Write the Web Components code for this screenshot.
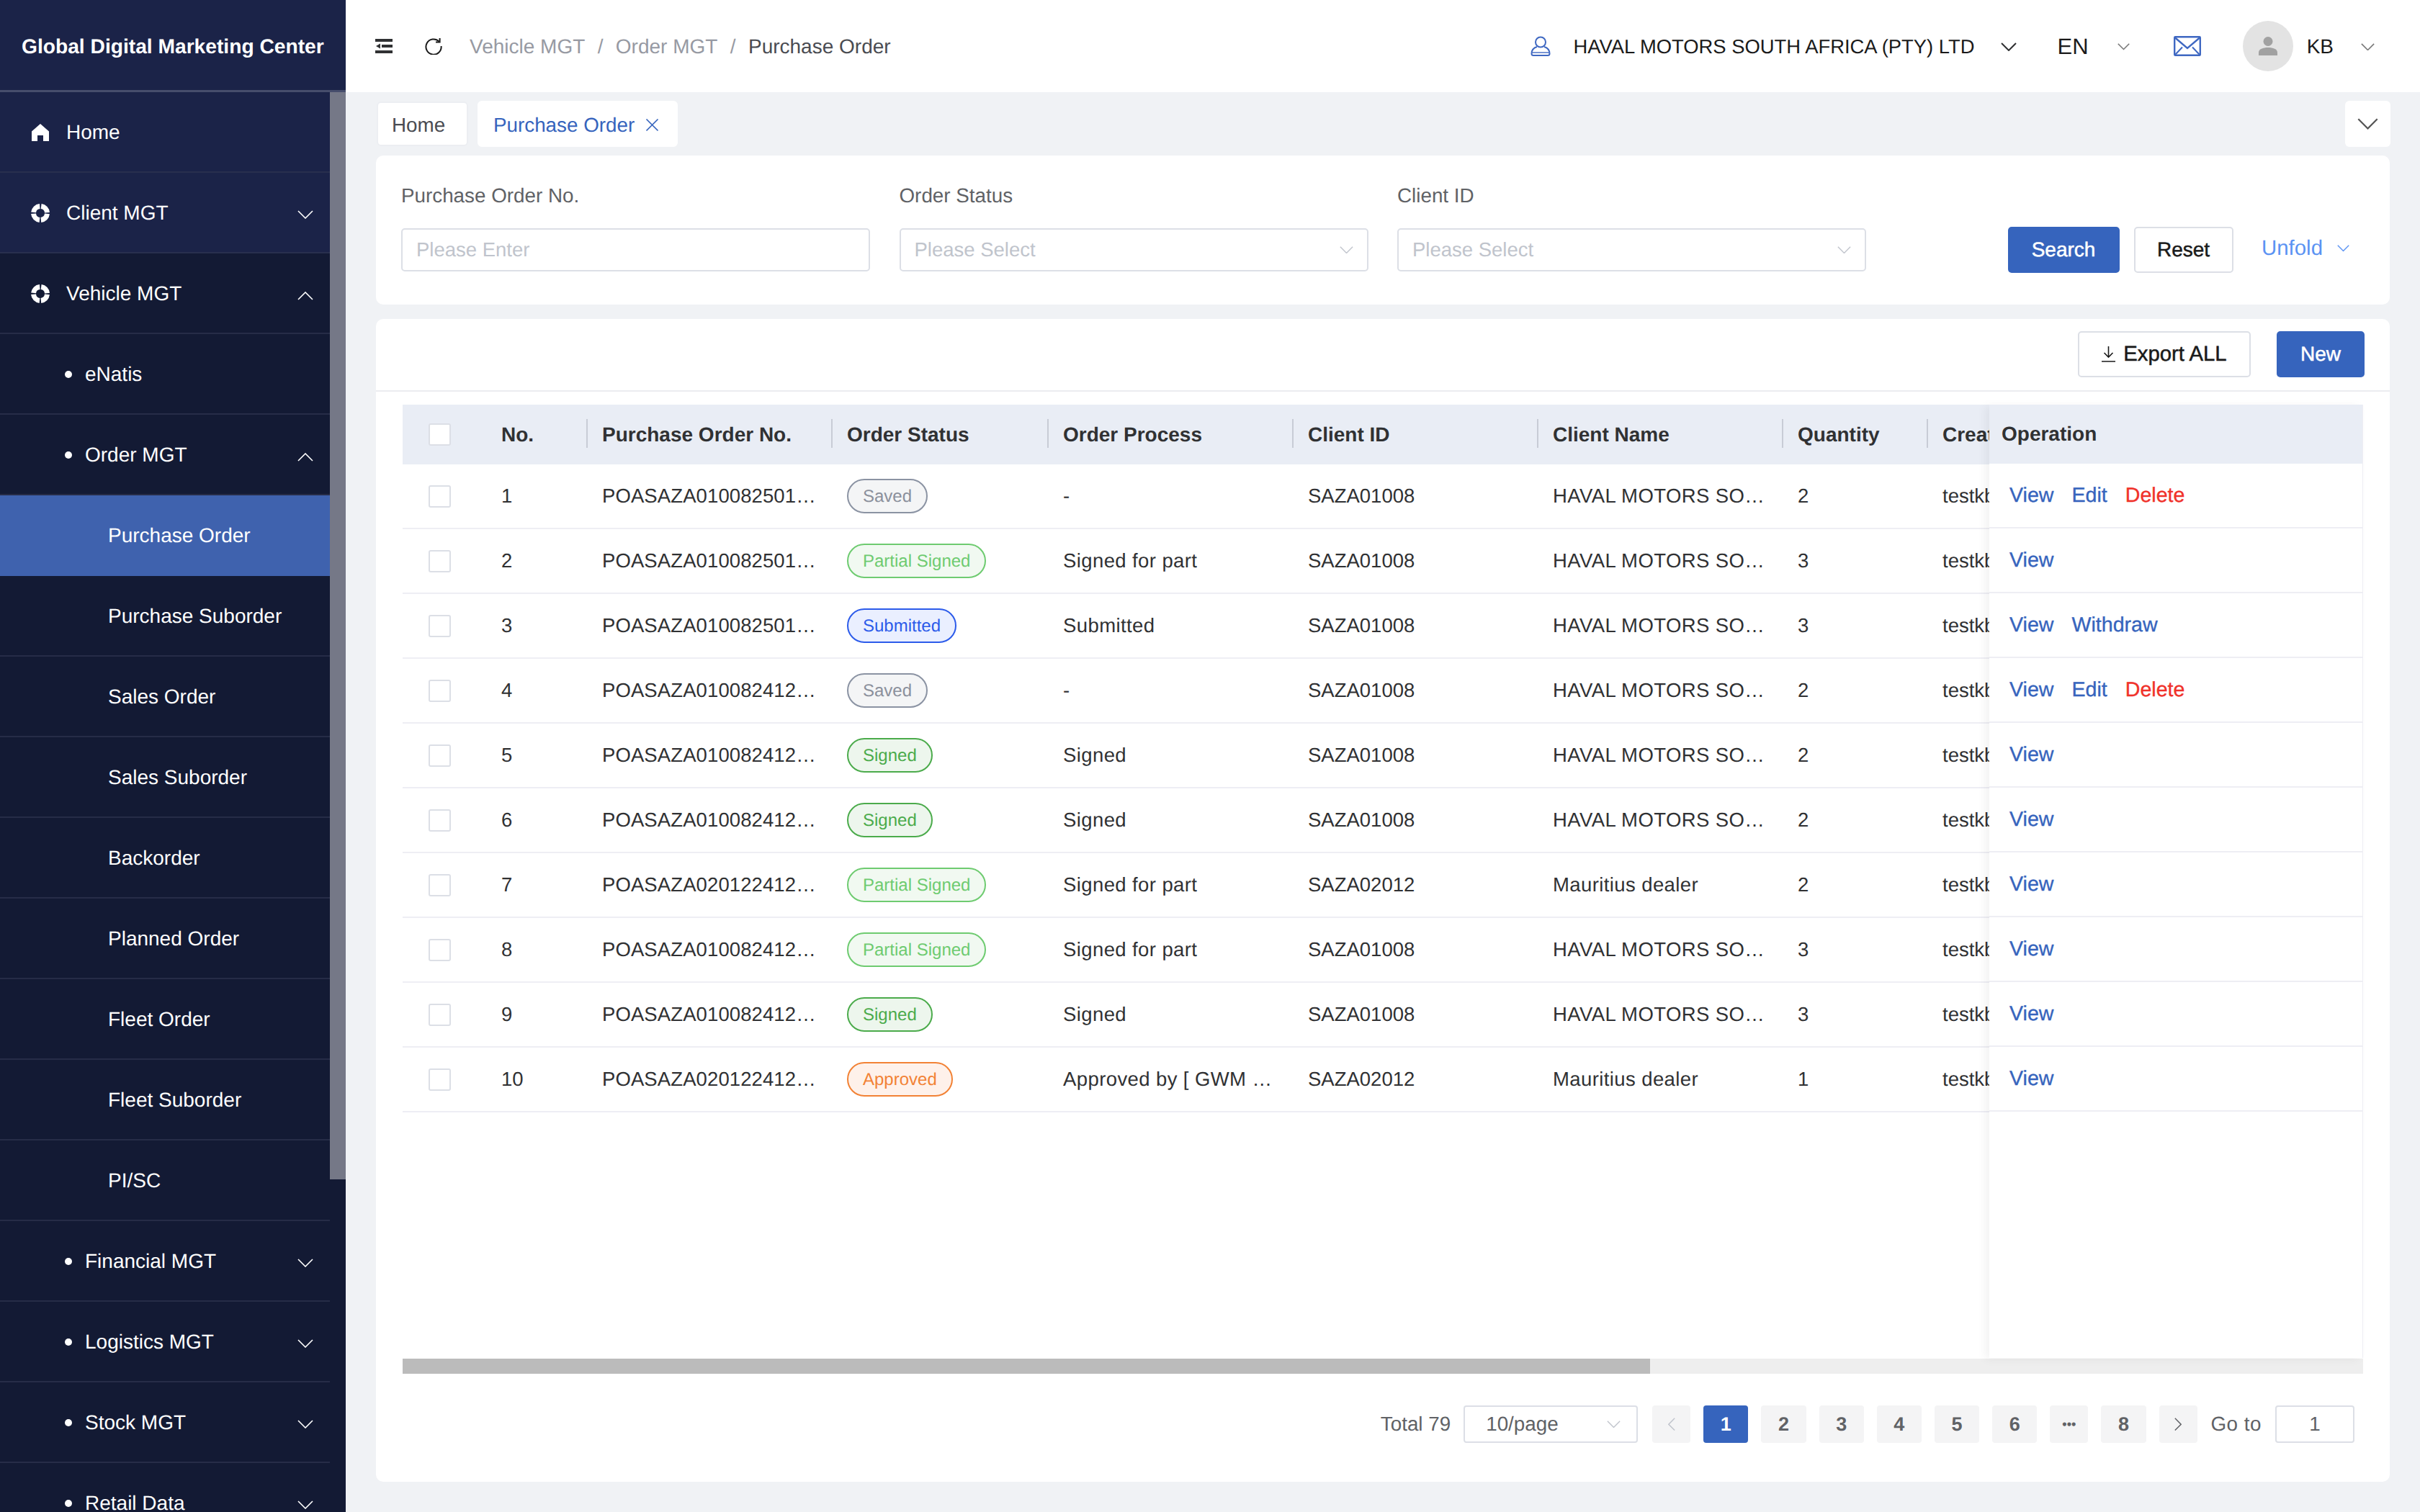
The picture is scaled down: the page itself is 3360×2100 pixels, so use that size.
<!DOCTYPE html>
<html lang="en">
<head>
<meta charset="utf-8">
<title>Purchase Order</title>
<style>
html, body { margin: 0; height: 100%; overflow: hidden; }
body { font: 27.8px "Liberation Sans", Arial, sans-serif; color: #303133; background: #f0f2f5; text-rendering: geometricPrecision; }
</style>
</head>
<body>
<app-shell>
  <side-nav slot="side">
    <nav-item icon="home">Home</nav-item>
    <nav-item icon="target" arrow="down">Client MGT</nav-item>
    <nav-item icon="target" arrow="up" dark>Vehicle MGT</nav-item>
    <nav-item level="1" dark>eNatis</nav-item>
    <nav-item level="1" arrow="up" dark>Order MGT</nav-item>
    <nav-item level="2" active>Purchase Order</nav-item>
    <nav-item level="2" dark>Purchase Suborder</nav-item>
    <nav-item level="2" dark>Sales Order</nav-item>
    <nav-item level="2" dark>Sales Suborder</nav-item>
    <nav-item level="2" dark>Backorder</nav-item>
    <nav-item level="2" dark>Planned Order</nav-item>
    <nav-item level="2" dark>Fleet Order</nav-item>
    <nav-item level="2" dark>Fleet Suborder</nav-item>
    <nav-item level="2" dark>PI/SC</nav-item>
    <nav-item level="1" arrow="down" dark>Financial MGT</nav-item>
    <nav-item level="1" arrow="down" dark>Logistics MGT</nav-item>
    <nav-item level="1" arrow="down" dark>Stock MGT</nav-item>
    <nav-item level="1" arrow="down" dark>Retail Data</nav-item>
  </side-nav>
  <top-bar></top-bar>
  <tab-strip></tab-strip>
  <search-panel></search-panel>
  <order-table></order-table>
</app-shell>

<script>
const chevron = (w, color, dir = "down", sw = 2) => {
  const pts = dir === "down" ? "1,1 11,11 21,1" : dir === "up" ? "1,11 11,1 21,11" : dir === "left" ? "11,1 1,11 11,21" : "1,1 11,11 1,21";
  const box = dir === "left" || dir === "right" ? "0 0 12 22" : "0 0 22 12";
  return `<svg width="${w}" viewBox="${box}" fill="none" stroke="${color}" stroke-width="${sw}" style="display:block;flex:none"><polyline points="${pts}"/></svg>`;
};

class AppShell extends HTMLElement {
  constructor() {
    super();
    this.attachShadow({ mode: "open" });
    this.shadowRoot.innerHTML = `
<style>
:host { display: grid; grid-template-columns: 480px 1fr; height: 2100px; width: 3360px; }
main { display: flex; flex-direction: column; min-width: 0; }
</style>
<slot name="side"></slot>
<main><slot></slot></main>`;
  }
}

class SideNav extends HTMLElement {
  constructor() {
    super();
    this.attachShadow({ mode: "open" });
    this.shadowRoot.innerHTML = `
<style>
:host { display: flex; flex-direction: column; height: 2100px; overflow: hidden; position: relative; background: #131a34; }
.logo { flex: none; height: 128px; box-sizing: border-box; display: flex; align-items: center; padding: 3px 0 0 30px; background: #1b2348;
  border-bottom: 3px solid #474e6c; color: #fff; font-weight: 700; font-size: 28.2px; white-space: nowrap; }
.menu { width: 458px; }
.thumb { position: absolute; left: 458px; top: 128px; width: 22px; height: 1510px; background: #757887; }
</style>
<div class="logo">Global Digital Marketing Center</div>
<div class="menu"><slot></slot></div>
<div class="thumb"></div>`;
  }
}

class NavItem extends HTMLElement {
  constructor() {
    super();
    this.attachShadow({ mode: "open" });
  }
  connectedCallback() {
    const level = this.getAttribute("level") || "0";
    const icon = this.getAttribute("icon");
    const arrow = this.getAttribute("arrow");
    const glyph = icon === "home"
      ? `<svg class="ico" viewBox="0 0 26 26" fill="#fff"><path d="M13 1 L25 11.5 V25 H17 V17 H9 V25 H1 V11.5 Z"/></svg>`
      : icon === "target"
      ? `<svg class="ico" viewBox="0 0 26 26" fill="none" stroke="#fff" stroke-width="7"><circle cx="13" cy="13" r="9.5" stroke-dasharray="12.9 2" stroke-dashoffset="-1"/></svg>`
      : level === "1" ? `<span class="dot"></span>` : "";
    this.shadowRoot.innerHTML = `
<style>
:host { display: flex; align-items: center; box-sizing: border-box; height: 112px; padding-top: 2px; background: #131a34; border-bottom: 2px solid #262c47; color: #fff; font-size: 28px; white-space: nowrap; }
:host(:not([dark]):not([active])) { background: #1b2348; border-bottom-color: #282f4e; }
:host([active]) { background: #3f62ae; border-bottom-color: #3f62ae; }
:host([level="2"]) { padding-left: 150px; }
:host([level="1"]) { padding-left: 90px; }
:host(:not([level])) { padding-left: 43px; }
.ico { width: 26px; height: 26px; flex: none; margin-right: 23px; }
.dot { width: 10px; height: 10px; border-radius: 50%; background: #fff; margin-right: 18px; flex: none; }
.arrow { margin-left: auto; margin-right: 23px; padding-top: ${arrow === "up" ? 6 : 4}px; }
</style>
${glyph}<slot></slot>${arrow ? `<span class="arrow">${chevron(22, "#fff", arrow, 1.6)}</span>` : ""}`;
  }
}

class TopBar extends HTMLElement {
  constructor() {
    super();
    this.attachShadow({ mode: "open" });
    this.shadowRoot.innerHTML = `
<style>
:host { display: flex; align-items: center; flex: none; height: 128px; background: #fff; padding: 0 63px 0 41px; white-space: nowrap; }
svg { flex: none; display: block; }
.crumbs { margin-left: 38px; padding-top: 2px; color: #979aa3; font-size: 28px; }
.crumbs i { font-style: normal; margin: 0 17.4px; }
.crumbs b { font-weight: 400; color: #4a4c52; }
.right { margin-left: auto; display: flex; align-items: center; color: #1a1a1a; font-size: 27.4px; }
.right span { padding-top: 2px; }
.avatar { width: 70px; height: 70px; border-radius: 50%; background: #e3e3e3; display: flex; align-items: center; justify-content: center; margin: 0 19px 0 58px; }
</style>
<svg width="24" height="20" viewBox="0 0 24 20" fill="#303133"><rect width="24" height="4"/><rect y="16" width="24" height="4"/><rect x="9" y="8" width="15" height="4"/><path d="M1 10 L7 6.5 V13.5 Z"/></svg>
<svg style="margin-left:45px" width="24" height="24" viewBox="0 0 24 24" fill="none" stroke="#1a1a1a" stroke-width="2"><path d="M19.5 5.5 A10.6 10.6 0 1 0 22.6 12"/><path d="M20.6 1 V6.6 H15" fill="none"/></svg>
<div class="crumbs">Vehicle MGT<i>/</i>Order MGT<i>/</i><b>Purchase Order</b></div>
<div class="right">
  <svg width="28" height="28" viewBox="0 0 28 28" fill="none" stroke="#3f68c2" stroke-width="2"><circle cx="14" cy="8.5" r="7"/><path d="M9 15 C4 16.5 1.5 20 1.5 24.5 Q1.5 27 4 27 H24 Q26.5 27 26.5 24.5 C26.5 20 24 16.5 19 15"/><path d="M2 23 H26" stroke-width="1.4"/></svg>
  <span style="margin-left:32px">HAVAL MOTORS SOUTH AFRICA (PTY) LTD</span>
  <span style="margin-left:36px">${chevron(22, "#303133", "down", 2)}</span>
  <span style="margin-left:57px;font-size:31px">EN</span>
  <span style="margin-left:40px">${chevron(17, "#777", "down", 2)}</span>
  <svg style="margin-left:61px" width="38" height="28" viewBox="0 0 38 28" fill="none" stroke="#3f68c2" stroke-width="2.4"><rect x="1.2" y="1.2" width="35.6" height="25.6" rx="1"/><path d="M1.5 2 L19 17 L36.5 2"/><path d="M2 26 L12 15.5 M36 26 L26 15.5" stroke-width="2"/></svg>
  <div class="avatar"><svg width="28" height="28" viewBox="0 0 28 28" fill="#a1a1a1"><circle cx="14" cy="7.5" r="6.5"/><path d="M1 27 V23 C1 18 7 16 14 16 C21 16 27 18 27 23 V27 Z"/></svg></div>
  <span style="font-size:28px">KB</span>
  <span style="margin-left:38px">${chevron(19, "#777", "down", 1.8)}</span>
</div>`;
  }
}

class TabStrip extends HTMLElement {
  constructor() {
    super();
    this.attachShadow({ mode: "open" });
    this.shadowRoot.innerHTML = `
<style>
:host { display: flex; flex: none; height: 64px; margin: 12px 41px 0 43px; align-items: center; gap: 13px; }
.tab { height: 62px; width: 127px; box-sizing: border-box; display: flex; align-items: center; background: #fff; border: 2px solid #eceef2; border-radius: 6px; padding: 3px 0 0 19px; color: #4a4c52; }
.on { height: 64px; width: 278px; border-color: #fff; padding: 3px 0 0 20px; color: #3664bd; gap: 15px; }
.more { margin-left: auto; width: 63px; height: 64px; background: #fff; border-radius: 6px; display: flex; align-items: center; justify-content: center; }
</style>
<div class="tab">Home</div>
<div class="tab on">Purchase Order
  <svg width="19" height="19" viewBox="0 0 19 19" stroke="#3664bd" stroke-width="1.7"><path d="M1.5 1.5 L17.5 17.5 M17.5 1.5 L1.5 17.5"/></svg>
</div>
<div class="more">${chevron(29, "#555", "down", 1.7)}</div>`;
  }
}

class FormField extends HTMLElement {
  constructor() {
    super();
    this.attachShadow({ mode: "open" });
  }
  connectedCallback() {
    const hint = this.getAttribute("hint");
    const select = this.hasAttribute("select");
    this.shadowRoot.innerHTML = `
<style>
:host { display: block; width: 651px; }
label { display: block; height: 40px; line-height: 40px; color: #606266; margin-bottom: 25px; }
.box { height: 60px; box-sizing: border-box; border: 2px solid #dcdfe6; border-radius: 5px; display: flex; align-items: center; justify-content: space-between; padding: 0 19px; color: #c0c4cc; background: #fff; font-size: 27.5px; }
</style>
<label><slot></slot></label>
<div class="box"><span>${hint}</span>${select ? chevron(19, "#c0c4cc", "down", 1.6) : ""}</div>`;
  }
}

class SearchPanel extends HTMLElement {
  constructor() {
    super();
    this.attachShadow({ mode: "open" });
    this.shadowRoot.innerHTML = `
<style>
:host { display: flex; flex: none; height: 207px; box-sizing: border-box; margin: 12px 42px 0; padding: 36px 56px 0 35px; background: #fff; border-radius: 10px; gap: 40.5px; white-space: nowrap; }
.actions { margin-left: auto; margin-top: 63px; height: 64px; display: flex; align-items: center; }
.btn { height: 64px; box-sizing: border-box; display: flex; align-items: center; justify-content: center; border-radius: 5px; -webkit-text-stroke: .5px; font-size: 28px; }
.search { width: 155px; background: #3664bd; color: #fff; }
.reset { width: 138px; margin-left: 20px; border: 2px solid #dcdfe6; color: #1a1a1a; }
.unfold { margin-left: 39.5px; color: #5b93f3; display: flex; align-items: center; gap: 20px; padding-bottom: 4px; font-size: 29.4px; }
</style>
<form-field hint="Please Enter">Purchase Order No.</form-field>
<form-field hint="Please Select" select>Order Status</form-field>
<form-field hint="Please Select" select>Client ID</form-field>
<div class="actions">
  <div class="btn search">Search</div>
  <div class="btn reset">Reset</div>
  <div class="unfold">Unfold ${chevron(17, "#5b93f3", "down", 1.8)}</div>
</div>`;
  }
}

class StatusTag extends HTMLElement {
  constructor() {
    super();
    this.attachShadow({ mode: "open" });
    this.shadowRoot.innerHTML = `
<style>
:host { display: inline-flex; align-items: center; height: 48px; box-sizing: border-box; padding: 1px 20px 0; border: 2px solid; border-radius: 24px; font-size: 24px; white-space: nowrap; }
:host([kind="saved"]) { color: #8b909c; border-color: #8b93a3; background: #f4f5f6; }
:host([kind="partial"]) { color: #6ecb70; border-color: #6ecb70; background: #f1f9f1; }
:host([kind="signed"]) { color: #4bab4b; border-color: #4bab4b; background: #edf6ed; }
:host([kind="submitted"]) { color: #2c5bea; border-color: #2c5bea; background: #eaefff; }
:host([kind="approved"]) { color: #f28235; border-color: #f28235; background: #fef1ea; }
</style>
<slot></slot>`;
  }
}

class TablePager extends HTMLElement {
  constructor() {
    super();
    this.attachShadow({ mode: "open" });
    const pages = ["1", "2", "3", "4", "5", "6"].map((n, i) => `<div class="pg${i === 0 ? " on" : ""}">${n}</div>`).join("");
    this.shadowRoot.innerHTML = `
<style>
:host { display: flex; align-items: center; justify-content: flex-end; height: 52px; margin-top: 44px; padding-right: 12px; color: #606266; white-space: nowrap; }
.size { width: 242px; height: 52px; box-sizing: border-box; border: 2px solid #dcdfe6; border-radius: 4px; margin-left: 18px; display: flex; align-items: center; justify-content: space-between; padding: 0 22px 0 29px; }
.pages { display: flex; gap: 18px; margin-left: 20px; }
.pg { width: 62.2px; height: 52px; background: #f4f4f5; border-radius: 4px; display: flex; align-items: center; justify-content: center; font-weight: 700; font-size: 27px; }
.pg.on { background: #3664bd; color: #fff; }
.arr { width: 53px; }
.dots { width: 53px; font-size: 18px; }
.goto { margin-left: 19px; letter-spacing: .5px; }
.jump { width: 110px; height: 52px; box-sizing: border-box; border: 2px solid #dcdfe6; border-radius: 4px; margin-left: 19px; display: flex; align-items: center; justify-content: center; }
</style>
<span>Total 79</span>
<div class="size"><span>10/page</span>${chevron(19, "#c0c4cc", "down", 1.6)}</div>
<div class="pages">
  <div class="pg arr">${chevron(10, "#c0c4cc", "left", 1.8)}</div>
  ${pages}
  <div class="pg dots">•••</div>
  <div class="pg">8</div>
  <div class="pg arr">${chevron(10, "#606266", "right", 1.8)}</div>
</div>
<span class="goto">Go to</span>
<div class="jump">1</div>`;
  }
}

const orders = [
  ["1", "POASAZA010082501…", "saved", "Saved", "-", "SAZA01008", "HAVAL MOTORS SO…", "2", ["View", "Edit", "Delete"]],
  ["2", "POASAZA010082501…", "partial", "Partial Signed", "Signed for part", "SAZA01008", "HAVAL MOTORS SO…", "3", ["View"]],
  ["3", "POASAZA010082501…", "submitted", "Submitted", "Submitted", "SAZA01008", "HAVAL MOTORS SO…", "3", ["View", "Withdraw"]],
  ["4", "POASAZA010082412…", "saved", "Saved", "-", "SAZA01008", "HAVAL MOTORS SO…", "2", ["View", "Edit", "Delete"]],
  ["5", "POASAZA010082412…", "signed", "Signed", "Signed", "SAZA01008", "HAVAL MOTORS SO…", "2", ["View"]],
  ["6", "POASAZA010082412…", "signed", "Signed", "Signed", "SAZA01008", "HAVAL MOTORS SO…", "2", ["View"]],
  ["7", "POASAZA020122412…", "partial", "Partial Signed", "Signed for part", "SAZA02012", "Mauritius dealer", "2", ["View"]],
  ["8", "POASAZA010082412…", "partial", "Partial Signed", "Signed for part", "SAZA01008", "HAVAL MOTORS SO…", "3", ["View"]],
  ["9", "POASAZA010082412…", "signed", "Signed", "Signed", "SAZA01008", "HAVAL MOTORS SO…", "3", ["View"]],
  ["10", "POASAZA020122412…", "approved", "Approved", "Approved by [ GWM …", "SAZA02012", "Mauritius dealer", "1", ["View"]],
];
const heads = ["No.", "Purchase Order No.", "Order Status", "Order Process", "Client ID", "Client Name", "Quantity", "Creator"];

class OrderTable extends HTMLElement {
  constructor() {
    super();
    this.attachShadow({ mode: "open" });
    const rows = orders.map(o => `
<div class="row">
  <div class="cell cb"><span class="check"></span></div>
  <div class="cell">${o[0]}</div>
  <div class="cell po">${o[1]}</div>
  <div class="cell"><status-tag kind="${o[2]}">${o[3]}</status-tag></div>
  <div class="cell proc">${o[4]}</div>
  <div class="cell">${o[5]}</div>
  <div class="cell proc">${o[6]}</div>
  <div class="cell">${o[7]}</div>
  <div class="cell">testkb</div>
</div>`).join("");
    const ops = orders.map(o => `<div class="op">${o[8].map(a => `<span class="${a === "Delete" ? "del" : ""}">${a}</span>`).join("")}</div>`).join("");
    this.shadowRoot.innerHTML = `
<style>
:host { display: block; flex: 1; margin: 20px 42px 42px; background: #fff; border-radius: 10px; }
.tools { height: 82px; border-bottom: 2px solid #ebecf0; display: flex; justify-content: flex-end; align-items: flex-start; padding: 17px 35px 0; gap: 36px; }
.btn { height: 64px; box-sizing: border-box; display: flex; align-items: center; justify-content: center; border-radius: 5px; -webkit-text-stroke: .5px; font-size: 28px; gap: 11px; }
.export { width: 240px; border: 2px solid #dcdfe6; color: #1a1a1a; font-size: 29.3px; }
.new { width: 122px; background: #3664bd; color: #fff; }
.body { margin: 18px 37px 0; position: relative; }
.scroller { height: 1325px; overflow: hidden; }
.row { display: grid; grid-template-columns: 117px 140px 340px 300px 340px 340px 340px 201px 400px; height: 90px; box-sizing: border-box; border-bottom: 2px solid #eeeef4; white-space: nowrap; color: #303133; font-size: 27.5px; }
.head { height: 83px; background: #e9edf5; border-bottom: 0; font-weight: 700; width: 2722px; font-size: 28px; }
.cell { display: flex; align-items: center; padding-left: 20px; overflow: hidden; }
.po { letter-spacing: .1px; }
.proc { letter-spacing: .4px; }
.head .cell { position: relative; }
.head .cell:not(.cb):not(:last-child)::after { content: ""; position: absolute; right: 0; top: 20px; height: 40px; width: 2px; background: #c8ccd6; }
.cb { padding-left: 36px; }
.check { width: 31px; height: 31px; box-sizing: border-box; border: 2px solid #dcdfe6; border-radius: 3px; background: #fff; }
.track { height: 21px; background: #eee; }
.bar { height: 21px; width: 1732px; background: #bbb; }
.fixed { position: absolute; top: 0; right: 0; width: 519px; height: 1324px; background: #fff; box-shadow: -6px 2px 12px rgba(0,0,0,.05); border-right: 1px solid #eeeef4; box-sizing: border-box; }
.fh { height: 82px; background: #e9edf5; display: flex; align-items: center; padding-left: 17px; font-weight: 700; font-size: 28px; }
.op { height: 90px; box-sizing: border-box; border-bottom: 2px solid #eeeef4; display: flex; align-items: center; gap: 25px; padding-left: 28px; color: #3664bd; font-size: 28.6px; -webkit-text-stroke: .35px; }
.del { color: #f0312a; }
</style>
<div class="tools">
  <div class="btn export"><svg width="19" height="22" viewBox="0 0 19 22" fill="none" stroke="#1a1a1a" stroke-width="1.6"><path d="M9.5 0 V15 M3.5 9 L9.5 15 L15.5 9 M0 21 H19"/></svg>Export ALL</div>
  <div class="btn new">New</div>
</div>
<div class="body">
  <div class="scroller">
    <div class="row head"><div class="cell cb"><span class="check"></span></div>${heads.map(h => `<div class="cell">${h}</div>`).join("")}</div>
    ${rows}
  </div>
  <div class="track"><div class="bar"></div></div>
  <div class="fixed">
    <div class="fh">Operation</div>
    ${ops}
  </div>
  <table-pager></table-pager>
</div>`;
  }
}

customElements.define("app-shell", AppShell);
customElements.define("side-nav", SideNav);
customElements.define("nav-item", NavItem);
customElements.define("top-bar", TopBar);
customElements.define("tab-strip", TabStrip);
customElements.define("form-field", FormField);
customElements.define("search-panel", SearchPanel);
customElements.define("status-tag", StatusTag);
customElements.define("table-pager", TablePager);
customElements.define("order-table", OrderTable);
</script>
</body>
</html>
